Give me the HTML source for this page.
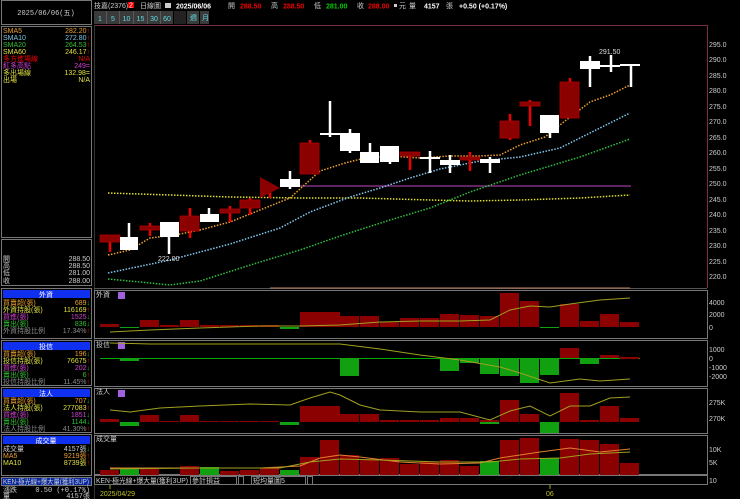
<!DOCTYPE html>
<html><head><meta charset="utf-8"><style>
html,body{margin:0;padding:0;background:#000;width:740px;height:499px;overflow:hidden}
svg{display:block}
text{font-family:"Liberation Sans","Noto Sans CJK TC",sans-serif;font-size:7px}
.m{font-family:"Liberation Mono","Noto Sans CJK TC",monospace}
.b{font-weight:bold}
</style></head><body>
<svg width="740" height="499" viewBox="0 0 740 499" xmlns="http://www.w3.org/2000/svg">
<rect width="740" height="499" fill="#000"/>
<g fill="none" stroke="#777" stroke-width="1">
<rect x="1.5" y="0.5" width="90" height="24"/>
<rect x="1.5" y="26.5" width="90" height="211"/>
<rect x="1.5" y="239.5" width="90" height="46"/>
</g>
<text x="46" y="15" fill="#ccc" text-anchor="middle" class="m">2025/06/06(五)</text>
<g class="m">
<text x="3" y="33" fill="#e8a030">SMA5</text><text x="90" y="33" fill="#e8a030" text-anchor="end">282.20<tspan fill="#f00">↑</tspan></text>
<text x="3" y="40" fill="#7ec8e8">SMA10</text><text x="90" y="40" fill="#7ec8e8" text-anchor="end">272.80<tspan fill="#f00">↑</tspan></text>
<text x="3" y="47" fill="#30c030">SMA20</text><text x="90" y="47" fill="#30c030" text-anchor="end">264.53<tspan fill="#f00">↑</tspan></text>
<text x="3" y="54" fill="#e0e040">SMA60</text><text x="90" y="54" fill="#e0e040" text-anchor="end">246.17<tspan fill="#f00">↑</tspan></text>
<text x="3" y="61" fill="#e00">多方進場線</text><text x="90" y="61" fill="#e00" text-anchor="end">N/A</text>
<text x="3" y="68" fill="#d040d0">紅多高點</text><text x="90" y="68" fill="#d040d0" text-anchor="end">249=</text>
<text x="3" y="75" fill="#e0e040">多出場線</text><text x="90" y="75" fill="#e0e040" text-anchor="end">132.98=</text>
<text x="3" y="82" fill="#e0e040">出場</text><text x="90" y="82" fill="#e0e040" text-anchor="end">N/A</text>
<text x="3" y="261" fill="#ccc">開</text><text x="90" y="261" fill="#ccc" text-anchor="end">288.50</text>
<text x="3" y="268" fill="#ccc">高</text><text x="90" y="268" fill="#ccc" text-anchor="end">288.50</text>
<text x="3" y="275" fill="#ccc">低</text><text x="90" y="275" fill="#ccc" text-anchor="end">281.00</text>
<text x="3" y="283" fill="#ccc">收</text><text x="90" y="283" fill="#ccc" text-anchor="end">288.00</text>
</g>
<rect x="1.5" y="288.5" width="90" height="50" fill="none" stroke="#777"/>
<rect x="3" y="290" width="87" height="8" fill="#1030f0"/>
<text x="46" y="297" fill="#fff" text-anchor="middle">外資</text>
<g class="m">
<text x="3" y="305" fill="#e8a030">買賣超(張)</text><text x="90" y="305" fill="#e8a030" text-anchor="end">689<tspan fill="#0c0">↓</tspan></text>
<text x="3" y="312" fill="#e0e040">外資持股(張)</text><text x="90" y="312" fill="#e0e040" text-anchor="end">116169<tspan fill="#f00">↑</tspan></text>
<text x="3" y="319" fill="#d040d0">買進(張)</text><text x="90" y="319" fill="#d040d0" text-anchor="end">1525<tspan fill="#0c0">↓</tspan></text>
<text x="3" y="326" fill="#30c030">賣出(張)</text><text x="90" y="326" fill="#30c030" text-anchor="end">836<tspan fill="#0c0">↓</tspan></text>
<text x="3" y="333" fill="#888">外資持股比例</text><text x="90" y="333" fill="#888" text-anchor="end">17.34%<tspan fill="#f00">↑</tspan></text>
</g>
<rect x="1.5" y="340.5" width="90" height="45" fill="none" stroke="#777"/>
<rect x="3" y="342" width="87" height="8" fill="#1030f0"/>
<text x="46" y="349" fill="#fff" text-anchor="middle">投信</text>
<g class="m">
<text x="3" y="356" fill="#e8a030">買賣超(張)</text><text x="90" y="356" fill="#e8a030" text-anchor="end">196<tspan fill="#0c0">↓</tspan></text>
<text x="3" y="363" fill="#e0e040">投信持股(張)</text><text x="90" y="363" fill="#e0e040" text-anchor="end">76675<tspan fill="#f00">↑</tspan></text>
<text x="3" y="370" fill="#d040d0">買進(張)</text><text x="90" y="370" fill="#d040d0" text-anchor="end">202<tspan fill="#0c0">↓</tspan></text>
<text x="3" y="377" fill="#30c030">賣出(張)</text><text x="90" y="377" fill="#30c030" text-anchor="end">6<tspan fill="#f00">↑</tspan></text>
<text x="3" y="384" fill="#888">投信持股比例</text><text x="90" y="384" fill="#888" text-anchor="end">11.45%<tspan fill="#f00">↑</tspan></text>
</g>
<rect x="1.5" y="387.5" width="90" height="45" fill="none" stroke="#777"/>
<rect x="3" y="389" width="87" height="8" fill="#1030f0"/>
<text x="46" y="396" fill="#fff" text-anchor="middle">法人</text>
<g class="m">
<text x="3" y="403" fill="#e8a030">買賣超(張)</text><text x="90" y="403" fill="#e8a030" text-anchor="end">707<tspan fill="#0c0">↓</tspan></text>
<text x="3" y="410" fill="#e0e040">法人持股(張)</text><text x="90" y="410" fill="#e0e040" text-anchor="end">277083<tspan fill="#f00">↑</tspan></text>
<text x="3" y="417" fill="#d040d0">買進(張)</text><text x="90" y="417" fill="#d040d0" text-anchor="end">1851<tspan fill="#0c0">↓</tspan></text>
<text x="3" y="424" fill="#30c030">賣出(張)</text><text x="90" y="424" fill="#30c030" text-anchor="end">1144<tspan fill="#0c0">↓</tspan></text>
<text x="3" y="431" fill="#888">法人持股比例</text><text x="90" y="431" fill="#888" text-anchor="end">41.30%<tspan fill="#f00">↑</tspan></text>
</g>
<rect x="1.5" y="434.5" width="90" height="41" fill="none" stroke="#777"/>
<rect x="3" y="436" width="87" height="8" fill="#1030f0"/>
<text x="46" y="443" fill="#fff" text-anchor="middle">成交量</text>
<g class="m">
<text x="3" y="451" fill="#ccc">成交量</text><text x="90" y="451" fill="#ccc" text-anchor="end">4157張<tspan fill="#0c0">↓</tspan></text>
<text x="3" y="458" fill="#e8a030">MA5</text><text x="90" y="458" fill="#e8a030" text-anchor="end">9219張<tspan fill="#f00">↑</tspan></text>
<text x="3" y="465" fill="#e0e040">MA10</text><text x="90" y="465" fill="#e0e040" text-anchor="end">8739張<tspan fill="#f00">↑</tspan></text>
</g>
<rect x="1.5" y="477.5" width="90" height="8" fill="#0828a0" stroke="#777"/>
<text x="3" y="484" fill="#ccc" font-size="6.5" textLength="86" lengthAdjust="spacingAndGlyphs">KEN-極光線+爆大量(獲利3UP)</text>
<text x="3" y="492" fill="#ccc" class="m">漲跌</text><text x="90" y="492" fill="#ccc" text-anchor="end" class="m">0.50 (+0.17%)</text>
<text x="3" y="498" fill="#ccc" class="m">量</text><text x="90" y="498" fill="#ccc" text-anchor="end" class="m">4157張</text>

<text x="94" y="8" fill="#ccc">技嘉(2376)</text><rect x="128" y="2" width="6" height="6" fill="#e00"/><text x="129" y="7.5" fill="#fff" font-size="5">2</text>
<text x="140" y="8" fill="#ccc">日線圖</text>
<rect x="165" y="3" width="6" height="5" fill="#ccc"/>
<text x="176" y="8.5" fill="#fff" class="b" font-size="8.5">2025/06/06</text>
<text x="228" y="8" fill="#ccc">開</text><text x="240" y="8.5" fill="#e00" class="b" font-size="8.5">288.50</text>
<text x="271" y="8" fill="#ccc">高</text><text x="283" y="8.5" fill="#e00" class="b" font-size="8.5">288.50</text>
<text x="314" y="8" fill="#ccc">低</text><text x="326" y="8.5" fill="#0c0" class="b" font-size="8.5">281.00</text>
<text x="357" y="8" fill="#ccc">收</text><text x="368" y="8.5" fill="#e00" class="b" font-size="8.5">288.00</text>
<rect x="394" y="4" width="3" height="3" fill="#ccc"/><text x="399" y="8" fill="#ccc">元</text>
<text x="409" y="8" fill="#ccc">量</text><text x="424" y="8.5" fill="#fff" class="b" font-size="8.5">4157</text><text x="446" y="8" fill="#ccc">張</text>
<text x="459" y="8.5" fill="#fff" class="b" font-size="8.5">+0.50 (+0.17%)</text>
<g>
<rect x="94" y="11" width="79" height="13" fill="#5a5a5a"/>
<g fill="#3a3a3a"><rect x="94" y="11" width="12" height="13"/><rect x="107" y="11" width="12" height="13"/><rect x="120" y="11" width="13" height="13"/><rect x="134" y="11" width="13" height="13"/><rect x="148" y="11" width="12" height="13"/><rect x="161" y="11" width="12" height="13"/></g>
<g fill="#60d8e0" font-size="8" text-anchor="middle"><text x="100" y="21">1</text><text x="113" y="21">5</text><text x="126.5" y="21">10</text><text x="140.5" y="21">15</text><text x="154" y="21">30</text><text x="167" y="21">60</text></g>
<rect x="174" y="11" width="12" height="13" fill="#222"/>
<rect x="187" y="11" width="12" height="13" fill="#3a3a3a"/><rect x="200" y="11" width="9" height="13" fill="#3a3a3a"/>
<text x="190" y="20" fill="#60d8e0">週</text><text x="202" y="20" fill="#60d8e0">月</text>
</g>

<line x1="94" y1="25.5" x2="707" y2="25.5" stroke="#7a2a4a"/>
<line x1="707.5" y1="25" x2="707.5" y2="288" stroke="#7a2a4a"/>
<line x1="94.5" y1="25" x2="94.5" y2="499" stroke="#333"/>
<g fill="#ccc" font-size="7.5">
<text x="709" y="47">295.0</text><text x="709" y="62">290.0</text><text x="709" y="78">285.0</text><text x="709" y="93">280.0</text><text x="709" y="109">275.0</text><text x="709" y="124">270.0</text><text x="709" y="140">265.0</text><text x="709" y="155">260.0</text><text x="709" y="171">255.0</text><text x="709" y="186">250.0</text><text x="709" y="202">245.0</text><text x="709" y="217">240.0</text><text x="709" y="233">235.0</text><text x="709" y="248">230.0</text><text x="709" y="264">225.0</text><text x="709" y="279">220.0</text>
</g>
<line x1="280" y1="186" x2="631" y2="186" stroke="#803080" stroke-width="1.5"/>
<g fill="none" stroke-dasharray="1.5 1.5" stroke-width="1.5">
<polyline stroke="#e0e030" points="108,193 170,195 230,197 300,198 360,198 430,200 470,201 520,200 580,198 630,195"/>
<polyline stroke="#30c040" points="108,279 140,282 170,285 200,281 260,262 300,250 340,236 390,220 430,208 470,192 520,175 580,157 630,139"/>
<polyline stroke="#80c8f0" points="108,273 170,260 230,244 280,228 310,212 350,197 380,188 410,178 440,169 480,161 520,157 560,148 600,128 630,113"/>
<polyline stroke="#f0a030" points="108,255 130,250 150,238 175,235 200,230 230,222 260,210 290,198 320,171 345,163 365,158 390,156 420,158 450,156 480,156 500,155 520,145 545,137 565,121 590,102 610,95 630,85"/>
</g>
<g>
<g stroke-width="2.5">
<line x1="110" y1="235" x2="110" y2="252" stroke="#e00"/>
<line x1="129" y1="223" x2="129" y2="250" stroke="#fff"/>
<line x1="150" y1="223" x2="150" y2="236" stroke="#e00"/>
<line x1="169" y1="222" x2="169" y2="254" stroke="#fff"/>
<line x1="190" y1="208" x2="190" y2="238" stroke="#e00"/>
<line x1="209" y1="208" x2="209" y2="222" stroke="#fff"/>
<line x1="230" y1="206" x2="230" y2="222" stroke="#e00"/>
<line x1="250" y1="198" x2="250" y2="215" stroke="#e00"/>
<line x1="270" y1="188" x2="270" y2="198" stroke="#e00"/>
<line x1="290" y1="171" x2="290" y2="189" stroke="#fff"/>
<line x1="310" y1="140" x2="310" y2="174" stroke="#e00"/>
<line x1="330" y1="101" x2="330" y2="137" stroke="#fff"/>
<line x1="350" y1="129" x2="350" y2="153" stroke="#fff"/>
<line x1="370" y1="143" x2="370" y2="163" stroke="#fff"/>
<line x1="390" y1="146" x2="390" y2="164" stroke="#fff"/>
<line x1="410" y1="152" x2="410" y2="170" stroke="#e00"/>
<line x1="430" y1="151" x2="430" y2="173" stroke="#fff"/>
<line x1="450" y1="155" x2="450" y2="173" stroke="#fff"/>
<line x1="470" y1="152" x2="470" y2="171" stroke="#e00"/>
<line x1="490" y1="157" x2="490" y2="173" stroke="#fff"/>
<line x1="510" y1="114" x2="510" y2="140" stroke="#e00"/>
<line x1="530" y1="100" x2="530" y2="126" stroke="#e00"/>
<line x1="550" y1="115" x2="550" y2="138" stroke="#fff"/>
<line x1="570" y1="78" x2="570" y2="118" stroke="#e00"/>
<line x1="590" y1="56" x2="590" y2="87" stroke="#fff"/>
<line x1="611" y1="55" x2="611" y2="72" stroke="#fff"/>
<line x1="631" y1="64" x2="631" y2="87" stroke="#fff"/>
</g>
<g fill="#8b0000" stroke="#b00000" stroke-width="0.8">
<rect x="100" y="235" width="20" height="7"/>
<rect x="140" y="226" width="20" height="4"/>
<rect x="180" y="216" width="19" height="15"/>
<rect x="220" y="209" width="20" height="4"/>
<rect x="240" y="200" width="20" height="8"/>
<rect x="300" y="143" width="19" height="31"/>
<rect x="400" y="152" width="20" height="4"/>
<rect x="460" y="157" width="20" height="3"/>
<rect x="500" y="121" width="19" height="17"/>
<rect x="520" y="102" width="20" height="4"/>
<rect x="560" y="82" width="19" height="36"/>
</g>
<polygon points="260,177 260,198 280,188" fill="#8b0000"/>
<g fill="#fff">
<rect x="120" y="237" width="18" height="13"/>
<rect x="160" y="222" width="19" height="15"/>
<rect x="200" y="214" width="19" height="8"/>
<rect x="280" y="179" width="20" height="8"/>
<rect x="320" y="133" width="20" height="2"/>
<rect x="340" y="133" width="20" height="18"/>
<rect x="360" y="152" width="19" height="11"/>
<rect x="380" y="146" width="19" height="16"/>
<rect x="420" y="157" width="20" height="2"/>
<rect x="440" y="160" width="20" height="5"/>
<rect x="480" y="159" width="20" height="4"/>
<rect x="540" y="115" width="19" height="18"/>
<rect x="580" y="61" width="20" height="8"/>
<rect x="600" y="65" width="20" height="2"/>
<rect x="620" y="64" width="20" height="2"/>
</g>
</g>
<text x="599" y="54" fill="#ddd" font-size="7.5">291.50</text>
<text x="158" y="261" fill="#ddd" font-size="7.5">222.00</text>
<line x1="94" y1="288.5" x2="707" y2="288.5" stroke="#555"/>
<line x1="270" y1="288" x2="630" y2="288" stroke="#c08060"/>

<g stroke="#777" fill="none">
<rect x="94.5" y="290.5" width="613" height="48"/>
<rect x="94.5" y="340.5" width="613" height="46"/>
<rect x="94.5" y="388.5" width="613" height="45"/>
<rect x="94.5" y="435.5" width="613" height="39"/>
<rect x="94.5" y="475.5" width="613" height="9"/>
</g>
<g fill="#ccc"><text x="96" y="297">外資</text><text x="96" y="347">投信</text><text x="96" y="394">法人</text><text x="96" y="441">成交量</text></g>
<g fill="#a060e0"><rect x="118" y="292" width="7" height="7"/><rect x="118" y="342" width="7" height="7"/><rect x="118" y="390" width="7" height="7"/></g>
<g fill="#ccc" font-size="7.5"><text x="709" y="305">4000</text><text x="709" y="317">2000</text><text x="709" y="330">0</text>
<text x="709" y="352">1000</text><text x="709" y="361">0</text><text x="709" y="370">-1000</text><text x="709" y="379">-2000</text>
<text x="709" y="405">275K</text><text x="709" y="421">270K</text>
<text x="709" y="452">10K</text><text x="709" y="465">5K</text><text x="709" y="483">10</text></g>
<g fill="#8b0000">
<rect x="100" y="324" width="19" height="3"/><rect x="140" y="320" width="19" height="7"/><rect x="160" y="325" width="19" height="2"/><rect x="180" y="320" width="19" height="7"/><rect x="200" y="325" width="19" height="2"/><rect x="220" y="325" width="19" height="2"/><rect x="240" y="325" width="19" height="2"/><rect x="260" y="325" width="19" height="2"/>
<rect x="300" y="312" width="40" height="15"/><rect x="340" y="316" width="19" height="11"/><rect x="360" y="316" width="19" height="11"/><rect x="380" y="322" width="19" height="5"/><rect x="400" y="318" width="19" height="9"/><rect x="420" y="318" width="19" height="9"/><rect x="440" y="314" width="19" height="13"/><rect x="460" y="315" width="19" height="12"/><rect x="480" y="316" width="19" height="11"/>
<rect x="500" y="293" width="19" height="34"/><rect x="520" y="301" width="19" height="26"/><rect x="560" y="304" width="19" height="23"/><rect x="580" y="321" width="19" height="6"/><rect x="600" y="314" width="19" height="13"/><rect x="620" y="322" width="19" height="5"/>
</g>
<g fill="#10a010"><rect x="120" y="327" width="19" height="1"/><rect x="280" y="327" width="19" height="2"/><rect x="540" y="327" width="19" height="1"/></g>
<polyline fill="none" stroke="#a0a020" points="110,332 150,330 200,328 260,326 300,326 340,325 380,322 420,321 460,321 490,320 510,310 530,306 550,307 570,304 600,300 630,298"/>
<line x1="100" y1="358.5" x2="640" y2="358.5" stroke="#0a0" />
<g fill="#10a010"><rect x="120" y="358" width="19" height="3"/><rect x="340" y="358" width="19" height="18"/><rect x="440" y="358" width="19" height="13"/><rect x="460" y="358" width="19" height="5"/><rect x="480" y="358" width="19" height="16"/><rect x="500" y="358" width="19" height="18"/><rect x="520" y="358" width="19" height="25"/><rect x="540" y="358" width="19" height="17"/><rect x="580" y="358" width="19" height="6"/></g>
<g fill="#8b0000"><rect x="560" y="348" width="19" height="10"/><rect x="600" y="355" width="19" height="3"/><rect x="620" y="357" width="19" height="2"/></g>
<polyline fill="none" stroke="#a0a020" points="110,343 150,344 250,344 300,344 340,344 380,349 420,355 460,360 500,367 520,373 550,383 580,379 600,381 630,379"/>
<g fill="#8b0000"><rect x="100" y="419" width="19" height="3"/><rect x="140" y="415" width="19" height="7"/><rect x="160" y="421" width="19" height="1"/><rect x="180" y="415" width="19" height="7"/><rect x="200" y="421" width="19" height="1"/><rect x="220" y="421" width="19" height="1"/><rect x="240" y="421" width="19" height="1"/><rect x="260" y="421" width="19" height="1"/><rect x="300" y="406" width="40" height="16"/><rect x="340" y="414" width="19" height="8"/><rect x="360" y="414" width="19" height="8"/><rect x="380" y="420" width="19" height="2"/><rect x="400" y="420" width="19" height="2"/><rect x="420" y="420" width="19" height="2"/><rect x="440" y="418" width="19" height="4"/><rect x="460" y="418" width="19" height="4"/><rect x="480" y="420" width="19" height="2"/><rect x="500" y="400" width="19" height="22"/><rect x="520" y="414" width="19" height="8"/><rect x="560" y="393" width="19" height="29"/><rect x="580" y="420" width="19" height="2"/><rect x="600" y="406" width="19" height="16"/><rect x="620" y="418" width="19" height="4"/></g>
<g fill="#10a010"><rect x="120" y="422" width="19" height="4"/><rect x="280" y="422" width="19" height="3"/><rect x="480" y="422" width="19" height="2"/><rect x="540" y="422" width="19" height="11"/></g>
<polyline fill="none" stroke="#a0a020" points="110,410 130,412 160,408 200,406 250,404 290,405 310,398 330,392 340,395 360,405 380,410 420,412 460,412 490,420 510,411 530,406 550,416 570,406 590,406 610,398 630,397"/>
<g fill="#8b0000"><rect x="100" y="470" width="19" height="5"/><rect x="140" y="469" width="19" height="6"/><rect x="180" y="466" width="19" height="9"/><rect x="220" y="471" width="19" height="4"/><rect x="240" y="470" width="19" height="5"/><rect x="260" y="468" width="19" height="7"/><rect x="300" y="457" width="19" height="18"/><rect x="320" y="440" width="19" height="35"/><rect x="340" y="455" width="19" height="20"/><rect x="360" y="459" width="19" height="16"/><rect x="380" y="458" width="19" height="17"/><rect x="400" y="464" width="19" height="11"/><rect x="420" y="462" width="19" height="13"/><rect x="440" y="460" width="19" height="15"/><rect x="460" y="466" width="19" height="9"/><rect x="500" y="440" width="19" height="35"/><rect x="520" y="438" width="19" height="37"/><rect x="560" y="439" width="19" height="36"/><rect x="580" y="440" width="19" height="35"/><rect x="600" y="444" width="19" height="31"/><rect x="620" y="463" width="19" height="12"/></g>
<g fill="#10a010"><rect x="120" y="468" width="19" height="7"/><rect x="200" y="467" width="19" height="8"/><rect x="280" y="470" width="19" height="5"/><rect x="480" y="461" width="19" height="14"/><rect x="540" y="458" width="19" height="17"/></g>
<polyline fill="none" stroke="#e08030" points="110,468 200,468 260,468 300,466 320,458 340,455 360,457 400,462 440,464 480,463 500,458 520,455 540,452 570,448 600,452 630,449"/>
<polyline fill="none" stroke="#a0a020" points="110,469 200,468 280,468 310,462 340,459 380,460 440,462 490,462 520,459 560,458 590,454 630,452"/>
<text x="96" y="483" fill="#ccc" font-size="6.5" textLength="92" lengthAdjust="spacingAndGlyphs">KEN-極光線+爆大量(獲利3UP)</text>
<rect x="190.5" y="476.5" width="46" height="8" fill="none" stroke="#777"/><text x="192" y="483" fill="#ccc">參計損益</text><rect x="238.5" y="476.5" width="5" height="8" fill="none" stroke="#777"/>
<rect x="251.5" y="476.5" width="54" height="8" fill="none" stroke="#777"/><text x="253" y="483" fill="#ccc">短均量圖5</text><rect x="307.5" y="476.5" width="5" height="8" fill="none" stroke="#777"/>
<line x1="110" y1="485" x2="110" y2="489" stroke="#a0a020"/>
<text x="100" y="496" fill="#c0c020" font-size="7.5">2025/04/29</text>
<line x1="550" y1="485" x2="550" y2="489" stroke="#a0a020"/>
<text x="546" y="496" fill="#c0c020" font-size="7.5">06</text>
</svg>
</body></html>
